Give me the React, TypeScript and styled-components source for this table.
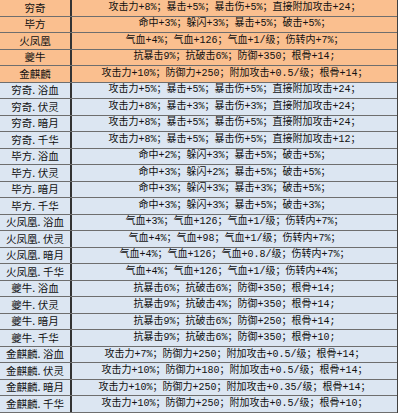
import styled, { createGlobalStyle } from "styled-components";

type Tone = "orange" | "blue";

interface Beast {
  name: string;
  effect: string;
  tone: Tone;
}

const beasts: Beast[] = [
  { tone: "orange", name: "穷奇", effect: "攻击力+8%；暴击+5%；暴击伤+5%；直接附加攻击+24；" },
  { tone: "orange", name: "毕方", effect: "命中+3%；躲闪+3%；暴击+5%；破击+5%；" },
  { tone: "orange", name: "火凤凰", effect: "气血+4%；气血+126；气血+1/级；伤转内+7%；" },
  { tone: "orange", name: "夔牛", effect: "抗暴击9%；抗破击6%；防御+350；根骨+14;" },
  { tone: "orange", name: "金麒麟", effect: "攻击力+10%；防御力+250；附加攻击+0.5/级；根骨+14；" },
  { tone: "blue", name: "穷奇. 浴血", effect: "攻击力+5%；暴击+5%；暴击伤+5%；直接附加攻击+24；" },
  { tone: "blue", name: "穷奇. 伏灵", effect: "攻击力+8%；暴击+3%；暴击伤+3%；直接附加攻击+24；" },
  { tone: "blue", name: "穷奇. 暗月", effect: "攻击力+8%；暴击+5%；暴击伤+5%；直接附加攻击+24；" },
  { tone: "blue", name: "穷奇. 千华", effect: "攻击力+8%；暴击+5%；暴击伤+5%；直接附加攻击+12；" },
  { tone: "blue", name: "毕方. 浴血", effect: "命中+2%；躲闪+3%；暴击+5%；破击+5%；" },
  { tone: "blue", name: "毕方. 伏灵", effect: "命中+3%；躲闪+2%；暴击+5%；破击+5%；" },
  { tone: "blue", name: "毕方. 暗月", effect: "命中+3%；躲闪+3%；暴击+3%；破击+5%；" },
  { tone: "blue", name: "毕方. 千华", effect: "命中+3%；躲闪+3%；暴击+5%；破击+3%；" },
  { tone: "blue", name: "火凤凰. 浴血", effect: "气血+3%；气血+126；气血+1/级；伤转内+7%；" },
  { tone: "blue", name: "火凤凰. 伏灵", effect: "气血+4%；气血+98；气血+1/级；伤转内+7%；" },
  { tone: "blue", name: "火凤凰. 暗月", effect: "气血+4%；气血+126；气血+0.8/级；伤转内+7%；" },
  { tone: "blue", name: "火凤凰. 千华", effect: "气血+4%；气血+126；气血+1/级；伤转内+4%；" },
  { tone: "blue", name: "夔牛. 浴血", effect: "抗暴击6%；抗破击6%；防御+350；根骨+14;" },
  { tone: "blue", name: "夔牛. 伏灵", effect: "抗暴击9%；抗破击4%；防御+350；根骨+14;" },
  { tone: "blue", name: "夔牛. 暗月", effect: "抗暴击9%；抗破击6%；防御+250；根骨+14;" },
  { tone: "blue", name: "夔牛. 千华", effect: "抗暴击9%；抗破击6%；防御+350；根骨+10;" },
  { tone: "blue", name: "金麒麟. 浴血", effect: "攻击力+7%；防御力+250；附加攻击+0.5/级；根骨+14；" },
  { tone: "blue", name: "金麒麟. 伏灵", effect: "攻击力+10%；防御力+180；附加攻击+0.5/级；根骨+14；" },
  { tone: "blue", name: "金麒麟. 暗月", effect: "攻击力+10%；防御力+250；附加攻击+0.35/级；根骨+14；" },
  { tone: "blue", name: "金麒麟. 千华", effect: "攻击力+10%；防御力+250；附加攻击+0.5/级；根骨+10；" },
];

const GlobalStyle = createGlobalStyle`
  html, body {
    margin: 0;
    padding: 0;
    background: #ffffff;
  }
  body {
    font-family: "Noto Sans CJK SC", sans-serif;
    overflow: hidden;
  }
`;

function App() {
  return (
    <>
      <GlobalStyle />
      <Table>
        {beasts.map((b, i) => (
          <Row key={i} $tone={b.tone}>
            <NameCell>{b.name}</NameCell>
            <EffectCell>{b.effect}</EffectCell>
          </Row>
        ))}
      </Table>
    </>
  );
}

const Table = styled.div`
  display: flex;
  flex-direction: column;
  width: 398px;
  height: 414px;
  margin-top: -1px;
  border-right: 1px solid #404040;
  box-sizing: border-box;
`;

const Row = styled.div<{ $tone: Tone }>`
  flex: 1 1 0;
  min-height: 0;
  display: flex;
  align-items: stretch;
  background-color: ${(p) => (p.$tone === "orange" ? "#fabf8f" : "#dce6f2")};
  border-top: 1px solid #6e6e6e;
  color: #111111;
  line-height: 1;
  overflow: hidden;

  &:last-child {
    border-bottom: 1px solid #6e6e6e;
  }
`;

const NameCell = styled.div`
  flex: 0 0 70px;
  width: 70px;
  display: flex;
  align-items: center;
  justify-content: center;
  text-align: center;
  border-right: 2px solid #333333;
  font-size: 10.5px;
  white-space: nowrap;
`;

const EffectCell = styled.div`
  flex: 1 1 0;
  min-width: 0;
  display: flex;
  align-items: center;
  justify-content: center;
  font-family: "Liberation Mono", "Noto Sans CJK SC", monospace;
  font-size: 10px;
  white-space: nowrap;
`;

export default App;
